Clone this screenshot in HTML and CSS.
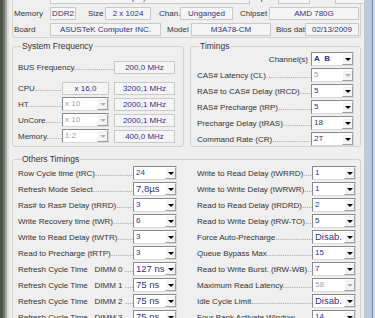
FILE: index.html
```html
<!DOCTYPE html>
<html lang="en">
<head>
  <meta charset="UTF-8" />
  <title>CPU Tweaker</title>
  <link rel="stylesheet" href="styles.css">
</head>
<body>
  <div class="screen">
    <div class="edge-left"></div>

    <div class="window">
      <!-- Processor / memory / board summary -->
      <div class="info">
        <div class="info-row">
          <span class="info-lbl">CPU</span>
          <span class="field f-cpu">AMD Phenom(tm) II X3 720 Processor</span>
          <span class="info-lbl l-cpuid">Cpuid</span>
          <span class="field f-cpuid">F42</span>
          <span class="info-lbl l-rev">Rev.</span>
          <span class="field f-rev">C2</span>
        </div>
        <div class="info-row">
          <span class="info-lbl">Memory</span>
          <span class="field f-type">DDR2</span>
          <span class="info-lbl l-size">Size</span>
          <span class="field f-size">2 x 1024</span>
          <span class="info-lbl l-chan">Chan.</span>
          <span class="field f-chan">Unganged</span>
          <span class="info-lbl l-chipset">Chipset</span>
          <span class="field f-chipset">AMD 780G</span>
        </div>
        <div class="info-row">
          <span class="info-lbl">Board</span>
          <span class="field f-board">ASUSTeK Computer INC.</span>
          <span class="info-lbl l-model">Model</span>
          <span class="field f-model">M3A78-CM</span>
          <span class="info-lbl l-bios">Bios date</span>
          <span class="field f-bios">02/13/2009</span>
        </div>
      </div>

      <div class="groups">
        <fieldset class="group sysfreq">
          <legend>System Frequency</legend>
          <div class="row row-bus">
            <span class="lbl">BUS Frequency</span>
            <span class="field f-mhz">200,0 MHz</span>
          </div>
          <div class="row">
            <span class="lbl">CPU</span>
            <span class="field f-mult">x 16,0</span>
            <span class="field f-mhz">3200,1 MHz</span>
          </div>
          <div class="row">
            <span class="lbl">HT</span>
            <span class="combo c-mult off"><span class="val">x 10</span><span class="btn"></span></span>
            <span class="field f-mhz">2000,1 MHz</span>
          </div>
          <div class="row">
            <span class="lbl">UnCore</span>
            <span class="combo c-mult off"><span class="val">x 10</span><span class="btn"></span></span>
            <span class="field f-mhz">2000,1 MHz</span>
          </div>
          <div class="row">
            <span class="lbl">Memory</span>
            <span class="combo c-mult off"><span class="val">1:2</span><span class="btn"></span></span>
            <span class="field f-mhz">400,0 MHz</span>
          </div>
        </fieldset>

        <fieldset class="group timings">
          <legend>Timings</legend>
          <div class="row row-chan">
            <span class="chan-lbl">Channel(s)</span>
            <span class="combo"><span class="val chan-val">A&nbsp;&nbsp;B</span><span class="btn"></span></span>
          </div>
          <div class="row">
            <span class="lbl">CAS# Latency (CL)</span>
            <span class="combo off"><span class="val">5</span><span class="btn"></span></span>
          </div>
          <div class="row">
            <span class="lbl">RAS# to CAS# Delay (tRCD)</span>
            <span class="combo"><span class="val">5</span><span class="btn"></span></span>
          </div>
          <div class="row">
            <span class="lbl">RAS# Precharge (tRP)</span>
            <span class="combo"><span class="val">5</span><span class="btn"></span></span>
          </div>
          <div class="row">
            <span class="lbl">Precharge Delay (tRAS)</span>
            <span class="combo"><span class="val">18</span><span class="btn"></span></span>
          </div>
          <div class="row">
            <span class="lbl">Command Rate (CR)</span>
            <span class="combo"><span class="val">2T</span><span class="btn"></span></span>
          </div>
        </fieldset>
      </div>

      <fieldset class="group others">
        <legend>Others Timings</legend>
        <div class="cols">
          <div class="col">
            <div class="row"><span class="lbl">Row Cycle time (tRC)</span><span class="combo"><span class="val">24</span><span class="btn"></span></span></div>
            <div class="row"><span class="lbl">Refresh Mode Select</span><span class="combo"><span class="val big">7,8µs</span><span class="btn"></span></span></div>
            <div class="row"><span class="lbl">Ras# to Ras# Delay (tRRD)</span><span class="combo"><span class="val">3</span><span class="btn"></span></span></div>
            <div class="row"><span class="lbl">Write Recovery time (tWR)</span><span class="combo"><span class="val">6</span><span class="btn"></span></span></div>
            <div class="row"><span class="lbl">Write to Read Delay (tWTR)</span><span class="combo"><span class="val">3</span><span class="btn"></span></span></div>
            <div class="row"><span class="lbl">Read to Precharge (tRTP)</span><span class="combo"><span class="val">3</span><span class="btn"></span></span></div>
            <div class="row"><span class="lbl">Refresh Cycle Time&nbsp;&nbsp; DIMM 0 </span><span class="combo"><span class="val big">127 ns</span><span class="btn"></span></span></div>
            <div class="row"><span class="lbl">Refresh Cycle Time&nbsp;&nbsp; DIMM 1 </span><span class="combo"><span class="val big">75 ns</span><span class="btn"></span></span></div>
            <div class="row"><span class="lbl">Refresh Cycle Time&nbsp;&nbsp; DIMM 2 </span><span class="combo"><span class="val big">75 ns</span><span class="btn"></span></span></div>
            <div class="row"><span class="lbl">Refresh Cycle Time&nbsp;&nbsp; DIMM 3 </span><span class="combo"><span class="val big">75 ns</span><span class="btn"></span></span></div>
          </div>
          <div class="col">
            <div class="row"><span class="lbl">Write to Read Delay (tWRRD)</span><span class="combo"><span class="val">1</span><span class="btn"></span></span></div>
            <div class="row"><span class="lbl">Write to Write Delay (tWRWR)</span><span class="combo"><span class="val">1</span><span class="btn"></span></span></div>
            <div class="row"><span class="lbl">Read to Read Delay (tRDRD)</span><span class="combo"><span class="val">2</span><span class="btn"></span></span></div>
            <div class="row"><span class="lbl">Read to Write Delay (tRW-TO)</span><span class="combo"><span class="val">5</span><span class="btn"></span></span></div>
            <div class="row"><span class="lbl">Force Auto-Precharge</span><span class="combo"><span class="val big">Disab.</span><span class="btn"></span></span></div>
            <div class="row"><span class="lbl">Queue Bypass Max</span><span class="combo"><span class="val">15</span><span class="btn"></span></span></div>
            <div class="row"><span class="lbl">Read to Write Burst. (tRW-WB)</span><span class="combo"><span class="val">7</span><span class="btn"></span></span></div>
            <div class="row"><span class="lbl">Maximum Read Latency</span><span class="combo off"><span class="val">58</span><span class="btn"></span></span></div>
            <div class="row"><span class="lbl">Idle Cycle Limit</span><span class="combo"><span class="val big">Disab.</span><span class="btn"></span></span></div>
            <div class="row"><span class="lbl">Four Bank Activate Window</span><span class="combo"><span class="val">14</span><span class="btn"></span></span></div>
          </div>
        </div>
      </fieldset>
    </div>

    <div class="edge-right"></div>
  </div>
</body>
</html>
```

FILE: styles.css
```css
/* Reset */
* {
  margin: 0;
  padding: 0;
  box-sizing: border-box;
}

body {
  width: 375px;
  height: 318px;
  overflow: hidden;
  font-family: "Liberation Sans", Arial, sans-serif;
  font-size: 8px;
  color: #333;
  background: #efefef;
}

.screen {
  display: flex;
  height: 318px;
}

/* Window frame edges */
.edge-left {
  width: 9px;
  background: linear-gradient(90deg, #4c5648 0, #4c5648 3px, #6f7869 3px, #6f7869 5px, #a3a99d 5px, #a3a99d 7px, #dcdcdc 7px);
}

.edge-right {
  width: 11px;
  background: linear-gradient(90deg, #c9c9c9 0, #c9c9c9 1px, #b9cbe3 1px, #b9cbe3 8px, #6f86a8 8px, #6f86a8 9px, #d7dce4 9px);
}

.window {
  flex: 1;
  min-width: 0;
  background: #efefef;
  padding: 0 3px 0 3px;
  overflow: hidden;
}

/* Read-only fields */
.field {
  display: flex;
  align-items: center;
  justify-content: center;
  flex-shrink: 0;
  height: 13px;
  background: #f5f5f5;
  border: 1px solid #c9c9c9;
  color: #2f3190;
  white-space: nowrap;
  overflow: hidden;
}

/* Top info block */
.info {
  margin-top: -11px;
  border: 1px solid #d3d3cc;
  border-top: none;
  border-radius: 0 0 3px 3px;
  height: 49px;
}

.info-row {
  display: flex;
  align-items: center;
  height: 16px;
}

.info-lbl {
  flex-shrink: 0;
  width: 37px;
  padding-left: 1px;
  white-space: nowrap;
}

.f-cpu { width: 200px; }
.l-cpuid { width: 24px; margin-left: 4px; }
.f-cpuid { width: 32px; }
.l-rev { width: 20px; margin-left: 5px; }
.f-rev { width: 33px; }

.f-type { width: 26px; }
.l-size { width: 18px; margin-left: 11px; }
.f-size { width: 46px; }
.l-chan { width: 22px; margin-left: 7px; }
.f-chan { width: 53px; }
.l-chipset { width: 30px; margin-left: 6px; }
.f-chipset { width: 90px; }

.f-board { width: 111px; }
.l-model { width: 25px; margin-left: 5px; }
.f-model { width: 80px; }
.l-bios { width: 30px; margin-left: 4px; }
.f-bios { width: 54px; }

/* Group boxes */
.group {
  min-width: 0;
  border: 1px solid #d3d3cc;
  border-radius: 3px;
  padding: 0 4px 0 5px;
}

.group legend {
  padding: 0 1px;
  margin-left: 3px;
  font-size: 8.5px;
  line-height: 11px;
  color: #333;
}

.groups {
  display: flex;
  gap: 6px;
  margin-top: 3px;
}

.sysfreq {
  flex: 0 0 172px;
  height: 106px;
  padding-right: 8px;
}

.timings {
  flex: 1;
  height: 106px;
  padding-right: 6px;
}

.others {
  margin-top: 7px;
  height: 200px;
}

.row {
  display: flex;
  align-items: center;
  height: 16px;
}

.lbl {
  flex: 1;
  min-width: 0;
  overflow: hidden;
  white-space: nowrap;
}

.lbl::after {
  content: "........................................................................";
  color: #777;
}

.row-bus {
  margin-top: 7px;
  margin-bottom: 5px;
}

.f-mult {
  width: 47px;
  margin-right: 5px;
}

.f-mhz {
  width: 61px;
}

/* Combo boxes */
.combo {
  display: flex;
  flex-shrink: 0;
  width: 44px;
  height: 14px;
  background: #fff;
  border: 1px solid #8a8a8a;
  border-right-color: #d8d8d8;
  border-bottom-color: #d8d8d8;
}

.combo .val {
  flex: 1;
  min-width: 0;
  padding-left: 2px;
  line-height: 12px;
  color: #2f3190;
  white-space: nowrap;
  overflow: hidden;
}

.combo .val.big {
  font-size: 9.5px;
}

.combo .btn {
  position: relative;
  width: 11px;
  background: #f4f4f4;
  border: 1px solid #fff;
  border-right-color: #a0a0a0;
  border-bottom-color: #a0a0a0;
}

.combo .btn::after {
  content: "";
  position: absolute;
  left: 2px;
  top: 4px;
  border-left: 3px solid transparent;
  border-right: 3px solid transparent;
  border-top: 3px solid #000;
}

.combo.off .val {
  color: #a3a3a3;
}

.combo.off .btn::after {
  border-top-color: #b5b5b5;
}

.c-mult {
  width: 47px;
  margin-right: 5px;
}

.row-chan {
  justify-content: flex-end;
  margin-top: -1px;
}

.chan-lbl {
  margin-right: 3px;
}

.chan-val {
  padding-left: 5px;
  font-weight: bold;
  color: #222;
}

.timings .combo {
  width: 43px;
}

.timings .lbl {
  padding-left: 1px;
}

/* Others timings: two columns */
.cols {
  display: flex;
  gap: 20px;
}

.col {
  flex: 1 1 0;
  min-width: 0;
}

.col .combo {
  width: 44px;
}
```
